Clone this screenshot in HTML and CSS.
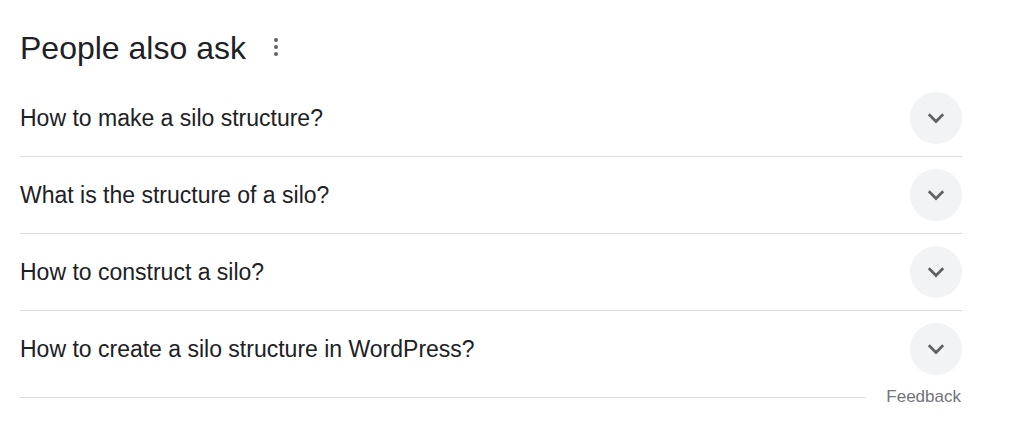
FILE: index.html
```html
<!DOCTYPE html>
<html>
<head>
<meta charset="utf-8">
<link rel="stylesheet" href="styles.css">
</head>
<body>
<div class="paa">
  <div class="header">
    <h2 class="title">People also ask</h2>
    <span class="menu" aria-label="More options"><i></i><i></i><i></i></span>
  </div>
  <div class="list">
    <div class="row"><span class="q">How to make a silo structure?</span><span class="btn"><svg viewBox="0 0 24 24" width="24" height="24"><path d="M4.8 8.2 L12 15.4 L19.2 8.2" fill="none" stroke="#5f6368" stroke-width="2.8"/></svg></span></div>
    <div class="row"><span class="q">What is the structure of a silo?</span><span class="btn"><svg viewBox="0 0 24 24" width="24" height="24"><path d="M4.8 8.2 L12 15.4 L19.2 8.2" fill="none" stroke="#5f6368" stroke-width="2.8"/></svg></span></div>
    <div class="row"><span class="q">How to construct a silo?</span><span class="btn"><svg viewBox="0 0 24 24" width="24" height="24"><path d="M4.8 8.2 L12 15.4 L19.2 8.2" fill="none" stroke="#5f6368" stroke-width="2.8"/></svg></span></div>
    <div class="row"><span class="q">How to create a silo structure in WordPress?</span><span class="btn"><svg viewBox="0 0 24 24" width="24" height="24"><path d="M4.8 8.2 L12 15.4 L19.2 8.2" fill="none" stroke="#5f6368" stroke-width="2.8"/></svg></span></div>
  </div>
  <div class="footer">
    <div class="line"></div>
    <span class="feedback">Feedback</span>
  </div>
</div>
</body>
</html>
```

FILE: styles.css
```css
html, body {
  margin: 0;
  padding: 0;
  background: #fff;
}
body {
  font-family: Arial, "Liberation Sans", sans-serif;
  color: #202124;
}
.paa {
  width: 942px;
  margin-left: 20px;
  padding-top: 16px;
}
.header {
  height: 64px;
  display: flex;
  align-items: center;
}
.title {
  margin: 0;
  font-size: 32px;
  font-weight: 400;
  line-height: 36px;
  color: #202124;
}
.menu {
  display: flex;
  flex-direction: column;
  gap: 3px;
  margin-left: 28px;
  margin-top: -2px;
}
.menu i {
  display: block;
  width: 4px;
  height: 4px;
  border-radius: 50%;
  background: #5f6368;
}
.row {
  height: 76px;
  display: flex;
  align-items: center;
  justify-content: space-between;
  border-bottom: 1px solid #dadce0;
}
.row:last-child {
  border-bottom: none;
}
.q {
  font-size: 23px;
  line-height: 30px;
}
.btn {
  width: 52px;
  height: 52px;
  border-radius: 50%;
  background: #f1f3f4;
  display: flex;
  align-items: center;
  justify-content: center;
}
.btn svg {
  display: block;
}
.footer {
  height: 22px;
  display: flex;
  align-items: center;
  margin-top: -1px;
}
.line {
  flex: 1;
  height: 1px;
  background: #dadce0;
  margin-right: 21px;
}
.feedback {
  font-size: 17px;
  line-height: 22px;
  color: #70757a;
  margin-right: 1px;
}
```
